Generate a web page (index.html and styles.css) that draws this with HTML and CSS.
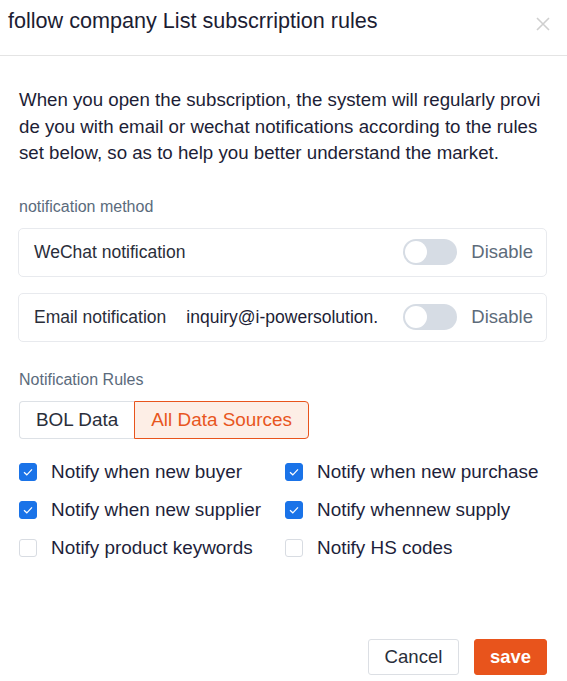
FILE: index.html
```html
<!DOCTYPE html>
<html>
<head>
<meta charset="utf-8">
<link rel="stylesheet" href="styles.css">
</head>
<body>
<div class="dialog">
  <div class="header">
    <div class="title">follow company List subscrription rules</div>
    <svg class="close" width="14" height="14" viewBox="0 0 14 14"><path d="M1 1L13 13M13 1L1 13" stroke="#cfcfcf" stroke-width="1.6" fill="none"/></svg>
  </div>
  <div class="content">
    <p class="intro">When you open the subscription, the system will regularly provi de you with email or wechat notifications according to the rules set below, so as to help you better understand the market.</p>
    <div class="section-label first">notification method</div>
    <div class="card">
      <span class="card-name">WeChat notification</span>
      <span class="spacer"></span>
      <span class="toggle"><span class="knob"></span></span>
      <span class="state">Disable</span>
    </div>
    <div class="card">
      <span class="card-name">Email notification</span>
      <span class="email">inquiry@i-powersolution.</span>
      <span class="spacer"></span>
      <span class="toggle"><span class="knob"></span></span>
      <span class="state">Disable</span>
    </div>
    <div class="section-label second">Notification Rules</div>
    <div class="tabs">
      <span class="tab">BOL Data</span>
      <span class="tab active">All Data Sources</span>
    </div>
    <div class="checks">
      <label class="check"><span class="box on"><svg width="12" height="10" viewBox="0 0 12 10"><path d="M2 5.2L4.8 7.8L10 2.4" stroke="#fff" stroke-width="1.2" fill="none"/></svg></span>Notify when new buyer</label>
      <label class="check"><span class="box on"><svg width="12" height="10" viewBox="0 0 12 10"><path d="M2 5.2L4.8 7.8L10 2.4" stroke="#fff" stroke-width="1.2" fill="none"/></svg></span>Notify when new purchase</label>
      <label class="check"><span class="box on"><svg width="12" height="10" viewBox="0 0 12 10"><path d="M2 5.2L4.8 7.8L10 2.4" stroke="#fff" stroke-width="1.2" fill="none"/></svg></span>Notify when new supplier</label>
      <label class="check"><span class="box on"><svg width="12" height="10" viewBox="0 0 12 10"><path d="M2 5.2L4.8 7.8L10 2.4" stroke="#fff" stroke-width="1.2" fill="none"/></svg></span>Notify whennew supply</label>
      <label class="check"><span class="box"></span>Notify product keywords</label>
      <label class="check"><span class="box"></span>Notify HS codes</label>
    </div>
  </div>
  <div class="footer">
    <button class="btn cancel">Cancel</button>
    <button class="btn save">save</button>
  </div>
</div>
</body>
</html>
```

FILE: styles.css
```css
html, body {
  margin: 0;
  padding: 0;
  background: #fff;
}
body {
  font-family: "Liberation Sans", Arial, sans-serif;
}
.dialog {
  width: 567px;
  height: 681px;
  display: flex;
  flex-direction: column;
  box-sizing: border-box;
}
.header {
  height: 56px;
  box-sizing: border-box;
  border-bottom: 1px solid #e4e4e4;
  display: flex;
  align-items: flex-start;
  justify-content: space-between;
  padding: 8px 17px 0 8px;
}
.title {
  font-size: 21.6px;
  line-height: 25px;
  color: #1c1d33;
}
.close {
  margin-top: 9px;
}
.content {
  padding: 0 17px 0 19px;
}
.intro {
  margin: 31px 0 0;
  font-size: 18.7px;
  line-height: 26.5px;
  color: #1d1e36;
}
.section-label {
  font-size: 16px;
  line-height: 20px;
  color: #5b6b7c;
}
.section-label.first {
  margin-top: 30px;
  margin-bottom: 11px;
}
.section-label.second {
  margin-top: 28px;
  margin-bottom: 11px;
}
.card {
  height: 49px;
  box-sizing: border-box;
  border: 1px solid #e8eaee;
  border-radius: 5px;
  margin-left: -1px;
  margin-right: 3px;
  display: flex;
  align-items: center;
  padding: 0 13px 0 15px;
  font-size: 17.5px;
  color: #2a2e3a;
}
.card + .card {
  margin-top: 16px;
}
.email {
  margin-left: 20px;
  color: #1d1e36;
}
.spacer {
  flex: 1;
}
.toggle {
  width: 54px;
  height: 26px;
  border-radius: 13px;
  background: #d6dce4;
  position: relative;
  flex: none;
}
.knob {
  position: absolute;
  left: 2px;
  top: 2px;
  width: 22px;
  height: 22px;
  border-radius: 50%;
  background: #fff;
}
.state {
  margin-left: 14px;
  font-size: 18.5px;
  color: #5d6b7a;
}
.tabs {
  display: flex;
}
.tab {
  height: 38px;
  box-sizing: border-box;
  border: 1px solid #dde1e6;
  padding: 0 16px;
  display: flex;
  align-items: center;
  font-size: 18.9px;
  color: #2a2e3a;
}
.tab:first-child {
  border-radius: 4px 0 0 4px;
  border-right: none;
}
.tab.active {
  background: #fdeee6;
  border-color: #e8541c;
  color: #e8561e;
  border-radius: 0 4px 4px 0;
}
.checks {
  margin-top: 14px;
  display: grid;
  grid-template-columns: 266px 1fr;
}
.check {
  height: 38px;
  display: flex;
  align-items: center;
  font-size: 18.9px;
  color: #1e1f3b;
}
.box {
  width: 18px;
  height: 18px;
  box-sizing: border-box;
  border: 1px solid #d8dce2;
  border-radius: 3px;
  margin-right: 14px;
  display: flex;
  align-items: center;
  justify-content: center;
  flex: none;
}
.box.on {
  background: #1a73e8;
  border-color: #1a73e8;
}
.footer {
  margin-top: auto;
  display: flex;
  justify-content: flex-end;
  gap: 15px;
  padding: 0 20px 6px 0;
}
.btn {
  height: 36px;
  font-family: "Liberation Sans", Arial, sans-serif;
  font-size: 18.6px;
  border-radius: 3px;
  padding: 0;
  cursor: pointer;
}
.cancel {
  width: 91px;
  background: #fff;
  border: 1px solid #dcdfe4;
  color: #2a2e3a;
}
.save {
  width: 73px;
  background: #e8541c;
  border: 1px solid #e8541c;
  color: #fff;
  font-weight: bold;
  font-size: 18.4px;
}
```
